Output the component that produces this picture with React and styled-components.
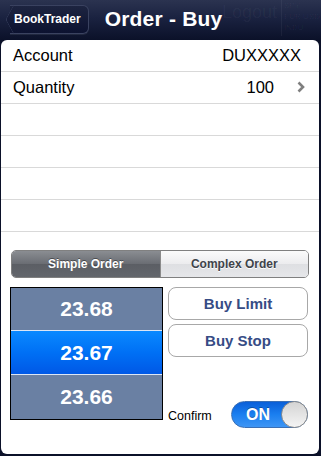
import React from "react";
import styled, { createGlobalStyle } from "styled-components";

const Global = createGlobalStyle`
  html, body { margin: 0; padding: 0; background: #0b1129; }
  body { font-family: "Liberation Sans", Arial, Helvetica, sans-serif; }
  * { box-sizing: border-box; }
`;

const Screen = styled.div`
  width: 321px;
  height: 456px;
  display: flex;
  flex-direction: column;
  background: #0b1129;
  overflow: hidden;
`;

const NavBar = styled.div`
  position: relative;
  height: 40px;
  flex: none;
  display: flex;
  align-items: center;
  padding: 0 0 2px 2px;
  background: linear-gradient(#2b3350 0%, #1a2240 45%, #0b1129 100%);
`;

const Ghost = styled.div`
  position: absolute;
  top: ${(p) => p.$top}px;
  left: ${(p) => p.$left}px;
  color: rgba(255, 255, 255, 0.045);
  font-size: ${(p) => p.$size}px;
  line-height: ${(p) => p.$lh || p.$size}px;
  white-space: pre;
`;

const GhostDivider = styled.div`
  position: absolute;
  top: 0;
  left: 281px;
  width: 1px;
  height: 36px;
  background: rgba(255, 255, 255, 0.05);
`;

const BackButton = styled.div`
  position: relative;
  height: 29px;
  margin-left: 8px;
  padding: 0 7px 0 4px;
  display: flex;
  align-items: center;
  color: #fff;
  font-weight: bold;
  font-size: 12px;
  background: linear-gradient(#1d2440, #0c1230);
  border: 1px solid #3a4260;
  border-left: none;
  border-radius: 0 6px 6px 0;
  box-shadow: 0 1px 0 rgba(255, 255, 255, 0.08);
  &::before {
    content: "";
    position: absolute;
    left: -7px;
    top: 3px;
    width: 20px;
    height: 20px;
    transform: scaleX(0.55) rotate(45deg);
    transform-origin: center;
    background: linear-gradient(135deg, #1d2440, #0c1230);
    border-left: 1px solid #3a4260;
    border-bottom: 1px solid #3a4260;
    border-radius: 0 0 0 3px;
  }
  span { position: relative; }
`;

const Title = styled.div`
  margin-left: 16px;
  color: #fff;
  font-weight: bold;
  font-size: 21px;
  letter-spacing: 0.2px;
`;

const Panel = styled.div`
  flex: 1;
  margin: 0 2px 2px 1px;
  background: #fff;
  border-radius: 6px;
  display: flex;
  flex-direction: column;
`;

const Row = styled.div`
  height: 32px;
  display: flex;
  align-items: center;
  padding: 0 12px 1px 12px;
  border-bottom: 1px solid #d9d9d9;
  font-size: 16.5px;
  color: #000;
`;

const Label = styled.div`
  flex: 1;
`;

const Value = styled.div`
  margin-right: ${(p) => p.$mr || 0}px;
`;

const Chevron = styled.svg`
  width: 8px;
  height: 12px;
  margin-right: 2px;
`;

const Segmented = styled.div`
  margin: 18px 10px 0 10px;
  height: 28px;
  display: flex;
  border: 1px solid #808080;
  border-radius: 5px;
  overflow: hidden;
`;

const Segment = styled.div`
  flex: 1;
  display: flex;
  align-items: center;
  justify-content: center;
  font-size: 12px;
  font-weight: bold;
  color: ${(p) => (p.$active ? "#fff" : "#40434a")};
  text-shadow: ${(p) => (p.$active ? "0 -1px 0 rgba(0,0,0,0.4)" : "0 1px 0 #fff")};
  background: ${(p) =>
    p.$active
      ? "linear-gradient(#8a8d92, #6a6d73 50%, #5b5e64 51%, #63666c)"
      : "linear-gradient(#fbfbfb, #ececee 50%, #dedfe2 51%, #e6e7ea)"};
  & + & {
    border-left: 1px solid #8a8a8a;
  }
`;

const Bottom = styled.div`
  margin: 9px 10px 0 9px;
  display: grid;
  grid-template-columns: 153px 1fr;
  column-gap: 5px;
`;

const Picker = styled.div`
  height: 133px;
  border: 1px solid #000;
  display: flex;
  flex-direction: column;
  background: #6a80a3;
`;

const Cell = styled.div`
  flex: ${(p) => p.$flex};
  display: flex;
  align-items: center;
  justify-content: center;
  color: #fff;
  font-weight: bold;
  font-size: 21px;
  background: ${(p) =>
    p.$selected ? "linear-gradient(#0a89ff, #0070f5 50%, #0058e6)" : "#6a80a3"};
  border-top: ${(p) => (p.$selected ? "1px solid #dce6f5" : "none")};
  border-bottom: ${(p) => (p.$selected ? "1px solid #dce6f5" : "none")};
`;

const Side = styled.div`
  display: flex;
  flex-direction: column;
  gap: 4px;
  padding-right: 1px;
`;

const ActionButton = styled.div`
  height: 33px;
  border: 1px solid #a8a8a8;
  border-radius: 8px;
  background: #fff;
  display: flex;
  align-items: center;
  justify-content: center;
  color: #364c85;
  font-weight: bold;
  font-size: 15px;
`;

const ConfirmRow = styled.div`
  margin-top: 40px;
  display: flex;
  align-items: center;
  justify-content: space-between;
`;

const ConfirmLabel = styled.div`
  font-size: 12.5px;
  color: #000;
  margin-top: 2px;
`;

const Toggle = styled.div`
  position: relative;
  width: 77px;
  height: 27px;
  border-radius: 14px;
  background: linear-gradient(#0a5fd8, #1a7ff0 50%, #3e95f4);
  border: 1px solid #3a6fb5;
  display: flex;
  align-items: center;
  padding-left: 14px;
  color: #fff;
  font-weight: bold;
  font-size: 16px;
  text-shadow: 0 -1px 0 rgba(0, 0, 0, 0.3);
`;

const Knob = styled.div`
  position: absolute;
  right: -1px;
  top: -1px;
  width: 27px;
  height: 27px;
  border-radius: 50%;
  border: 1px solid #8a8a8a;
  background: linear-gradient(#d4d4d4, #f4f4f4);
`;

export default function App() {
  return (
    <>
      <Global />
      <Screen>
        <NavBar>
          <Ghost $top={3} $left={222} $size={18}>Logout</Ghost>
          <GhostDivider />
          <Ghost $top={0} $left={284} $size={8} $lh={11}>{"SPY\nEUR.USD\nINDU"}</Ghost>
          <BackButton>
            <span>BookTrader</span>
          </BackButton>
          <Title>Order - Buy</Title>
        </NavBar>
        <Panel>
          <Row>
            <Label>Account</Label>
            <Value $mr={6}>DUXXXXX</Value>
          </Row>
          <Row>
            <Label>Quantity</Label>
            <Value $mr={23}>100</Value>
            <Chevron viewBox="0 0 8 12">
              <path d="M1.5 1.5 L6 6 L1.5 10.5" fill="none" stroke="#7f7f7f" strokeWidth="2.6" />
            </Chevron>
          </Row>
          <Row />
          <Row />
          <Row />
          <Row />
          <Segmented>
            <Segment $active>Simple Order</Segment>
            <Segment>Complex Order</Segment>
          </Segmented>
          <Bottom>
            <Picker>
              <Cell $flex="42">23.68</Cell>
              <Cell $flex="44" $selected>23.67</Cell>
              <Cell $flex="44">23.66</Cell>
            </Picker>
            <Side>
              <ActionButton>Buy Limit</ActionButton>
              <ActionButton>Buy Stop</ActionButton>
              <ConfirmRow>
                <ConfirmLabel>Confirm</ConfirmLabel>
                <Toggle>
                  ON
                  <Knob />
                </Toggle>
              </ConfirmRow>
            </Side>
          </Bottom>
        </Panel>
      </Screen>
    </>
  );
}
